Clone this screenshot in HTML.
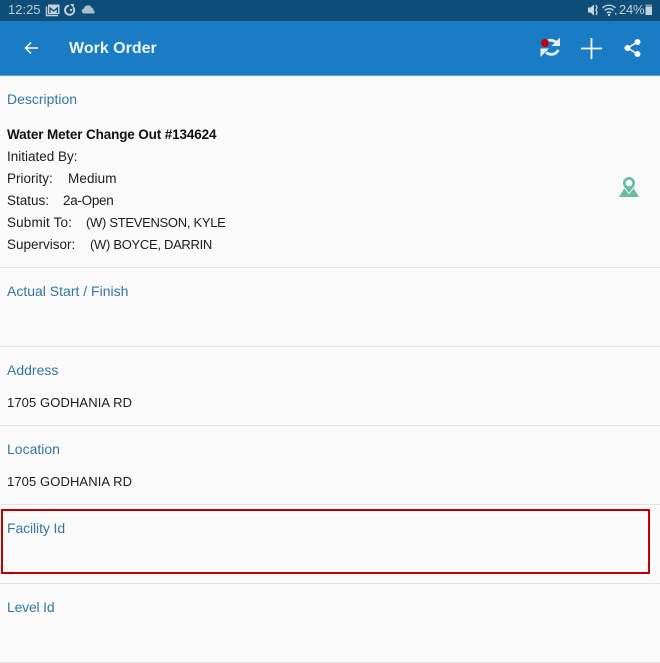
<!DOCTYPE html>
<html>
<head>
<meta charset="utf-8">
<style>
html,body{margin:0;padding:0;}
body{width:660px;height:663px;background:#fafafa;position:relative;overflow:hidden;font-family:"Liberation Sans",sans-serif;}
.a{position:absolute;white-space:nowrap;}
.status{left:0;top:0;width:660px;height:21px;background:#0f4e79;}
.bar{left:0;top:21px;width:660px;height:54px;background:#1a7cc4;}
.line{left:0;width:660px;height:1px;background:#e4e4e4;}
.h{left:7px;font-size:14px;line-height:18px;color:#34779f;}
.t{font-size:13.5px;line-height:18px;color:#1c1c1c;}
.c{font-size:13px;line-height:18px;color:#1c1c1c;}
</style>
</head>
<body>
<div class="a status"></div>
<div class="a bar"></div>
<div class="a" style="left:0;top:75px;width:660px;height:1px;background:#5aa3d6;"></div>

<div class="a" style="left:8px;top:2px;font-size:13px;line-height:16px;color:#b7cad8;">12:25</div>
<svg class="a" style="left:0;top:0" width="110" height="21" viewBox="0 0 110 21">
  <rect x="48" y="4.500" width="11.500" height="9.500" fill="#c3d2dd"/>
  <path d="M46.500 6.500v9h11.500" fill="none" stroke="#c3d2dd" stroke-width="1.400"/>
  <path d="M50 13V8l3.700 3 3.700-3v5" fill="none" stroke="#0f4e79" stroke-width="1.300"/>
  <path d="M69 5.600a4.600 4.600 0 1 0 4.300 1.800" fill="none" stroke="#c3d2dd" stroke-width="1.900"/>
  <path d="M70 4l4 0-.5 4z" fill="#c3d2dd"/>
  <circle cx="71" cy="10" r="1.200" fill="#c3d2dd"/>
  <path d="M84.500 13.500a2.500 2.500 0 0 1-.5-5 4 4 0 0 1 7.500-1 3 3 0 0 1 2 3 1.700 1.700 0 0 1 .5 3z" fill="#a9bfce"/>
</svg>

<svg class="a" style="left:580px;top:0" width="80" height="21" viewBox="0 0 80 21">
  <path d="M8 7.500h2.500L14 4.500v11l-3.500-3H8z" fill="#c9d6e0"/>
  <path d="M16 5l1 2.500-1 2.500 1 2.500-1 2.500" fill="none" stroke="#c9d6e0" stroke-width="1.300"/>
  <path d="M22.500 8a9 9 0 0 1 13 0M24.700 10.500a6 6 0 0 1 8.600 0M26.800 13a3 3 0 0 1 4.400 0" fill="none" stroke="#c9d6e0" stroke-width="1.300"/>
  <circle cx="29" cy="15" r="1.200" fill="#c9d6e0"/>
  <rect x="35" y="13" width="1.500" height="1.500" fill="#c9d6e0"/>
  <rect x="65.500" y="7" width="6.500" height="8" fill="#c3d2dd"/>
  <rect x="65.500" y="4.500" width="6.500" height="2.500" fill="#7d9db3"/>
</svg>
<div class="a" style="left:619px;top:2px;font-size:13px;line-height:16px;color:#c3d2dd;letter-spacing:-.2px;">24%</div>

<svg class="a" style="left:24px;top:40px" width="16" height="16" viewBox="0 0 16 16">
  <path d="M14 8H1.500M7 2.500L1.500 8 7 13.500" fill="none" stroke="#fff" stroke-width="1.500"/>
</svg>
<div class="a" style="left:69px;top:39px;font-size:16px;line-height:20px;font-weight:bold;color:#eef6fb;">Work Order</div>

<svg class="a" style="left:535px;top:32px" width="30" height="30" viewBox="0 0 30 30">
  <path d="M10 11C13 7.500 17 7.500 21 10" fill="none" stroke="#e3f0f9" stroke-width="2.800"/>
  <path d="M25 5.500v8.500h-8.500z" fill="#e3f0f9"/>
  <path d="M23.500 18C20.500 23 15.500 23.500 11 20.500" fill="none" stroke="#e3f0f9" stroke-width="2.800"/>
  <path d="M5.500 16.500H14L5.500 25z" fill="#e3f0f9"/>
  <circle cx="10" cy="11" r="4" fill="#c0000c"/>
</svg>
<svg class="a" style="left:580px;top:37px" width="24" height="24" viewBox="0 0 24 24">
  <path d="M11.500 1v21M1 11.500h21" fill="none" stroke="#f2f8fc" stroke-width="1.800"/>
</svg>
<svg class="a" style="left:623px;top:37px" width="20" height="22" viewBox="0 0 20 22">
  <circle cx="14.500" cy="5" r="3" fill="#fff"/>
  <circle cx="4.500" cy="11" r="3" fill="#fff"/>
  <circle cx="14.500" cy="17" r="3" fill="#fff"/>
  <path d="M14.500 5L4.500 11l10 6" fill="none" stroke="#fff" stroke-width="1.500"/>
</svg>

<div class="a h" style="top:90px;">Description</div>
<div class="a t" style="left:7px;top:126px;font-weight:bold;color:#111;letter-spacing:-.13px;">Water Meter Change Out #134624</div>
<div class="a t" style="left:7px;top:148px;">Initiated By:</div>
<div class="a t" style="left:7px;top:170px;">Priority:</div>
<div class="a t" style="left:68px;top:170px;letter-spacing:.1px;">Medium</div>
<div class="a t" style="left:7px;top:192px;">Status:</div>
<div class="a t" style="left:63px;top:192px;letter-spacing:-.3px;">2a-Open</div>
<div class="a t" style="left:7px;top:214px;letter-spacing:.15px;">Submit To:</div>
<div class="a c" style="left:86px;top:214px;letter-spacing:-.3px;">(W) STEVENSON, KYLE</div>
<div class="a t" style="left:7px;top:236px;">Supervisor:</div>
<div class="a c" style="left:90px;top:236px;letter-spacing:-.3px;">(W) BOYCE, DARRIN</div>

<svg class="a" style="left:617px;top:175px" width="24" height="24" viewBox="0 0 24 24">
  <path d="M2 22L7.500 13 12 18l4.500-5L22 22z" fill="#67bd9c"/>
  <path d="M12 18.500C9 14.500 5.500 12 5.500 8a6.500 6.500 0 0 1 13 0c0 4-3.500 6.500-6.500 10.500z" fill="#67bd9c" stroke="#fafafa" stroke-width="1"/>
  <circle cx="12" cy="8" r="3.300" fill="#fafafa"/>
</svg>

<div class="a line" style="top:267px;"></div>
<div class="a h" style="top:282px;">Actual Start / Finish</div>
<div class="a line" style="top:346px;"></div>
<div class="a h" style="top:361px;">Address</div>
<div class="a c" style="left:7px;top:394px;letter-spacing:.1px;">1705 GODHANIA RD</div>
<div class="a line" style="top:425px;"></div>
<div class="a h" style="top:440px;">Location</div>
<div class="a c" style="left:7px;top:473px;letter-spacing:.1px;">1705 GODHANIA RD</div>
<div class="a line" style="top:504px;"></div>
<div class="a h" style="top:519px;letter-spacing:-.1px;">Facility Id</div>
<div class="a" style="left:1px;top:509px;width:645px;height:61px;border:2px solid #c00000;"></div>
<div class="a line" style="top:583px;"></div>
<div class="a h" style="top:598px;letter-spacing:-.2px;">Level Id</div>
<div class="a line" style="top:662px;"></div>
</body>
</html>
